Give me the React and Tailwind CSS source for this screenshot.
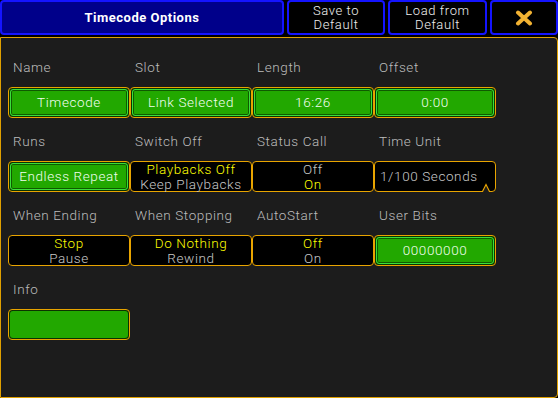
import React from "react";

const font = { fontFamily: "Roboto, 'Liberation Sans', sans-serif" };

function GreenButton({ children }) {
  return (
    <div className="h-[31px] rounded-[4px] border border-[#e8a400] bg-[#0b3300] p-px">
      <div className="flex h-full items-center justify-center rounded-[3px] border border-[#39e039] bg-[#22a800] text-[13.5px] font-light tracking-[0.6px] text-[#f2fff0] shadow-[inset_0_0_0_1px_#0f5a00]">
        {children}
      </div>
    </div>
  );
}

function DarkButton({ top, bottom, active }) {
  return (
    <div className="flex h-[31px] flex-col items-center justify-center rounded-[4px] border border-[#e8a400] bg-black text-[13.5px] leading-[15px] font-light tracking-[0.6px]">
      <span className={active === 0 ? "text-[#ffff00]" : "text-[#c8c8c8]"}>{top}</span>
      <span className={active === 1 ? "text-[#ffff00]" : "text-[#c8c8c8]"}>{bottom}</span>
    </div>
  );
}

function SelectButton({ children }) {
  return (
    <div className="relative flex h-[31px] items-center rounded-[4px] border border-[#e8a400] bg-black pl-[5px] text-[13.5px] font-light tracking-[0.6px] text-[#c8c8c8]">
      {children}
      <svg className="absolute right-[3px] bottom-[-1px]" width="12" height="9" viewBox="0 0 12 9">
        <path d="M2.5 9 L6 1.5 L9.5 9 Z" fill="#1c1c1c" />
        <path d="M0 8.5 H2.5 L6 1.5 L9.5 8.5 H12" fill="none" stroke="#e8a400" strokeWidth="1.2" />
      </svg>
    </div>
  );
}

function Cell({ label, children }) {
  return (
    <div className="w-[122px]">
      <div className="flex h-[20px] items-center pl-[5px] text-[13.5px] font-light tracking-[0.6px] text-[#bcbcbc]">{label}</div>
      <div className="mt-[10px]">{children}</div>
    </div>
  );
}

export default function App() {
  return (
    <div style={font} className="h-[398px] w-[558px] overflow-hidden bg-black">
      {/* Header */}
      <div className="flex h-[35px] gap-[3px]">
        <div className="flex w-[284px] items-center justify-center rounded-[4px] border-2 border-[#1414ff] bg-[#00008a] text-[13px] font-bold tracking-[0.5px] text-white">
          Timecode Options
        </div>
        <div className="flex w-[98px] flex-col items-center justify-center rounded-[4px] border-2 border-[#1414ff] bg-black text-[13px] leading-[14px] font-light tracking-[0.6px] text-[#f0f0f0]">
          <span>Save to</span>
          <span>Default</span>
        </div>
        <div className="flex w-[99px] flex-col items-center justify-center rounded-[4px] border-2 border-[#1414ff] bg-black text-[13px] leading-[14px] font-light tracking-[0.6px] text-[#f0f0f0]">
          <span>Load from</span>
          <span>Default</span>
        </div>
        <div className="flex flex-1 items-center justify-center rounded-[4px] border-2 border-[#1414ff] bg-black">
          <svg width="18" height="16" viewBox="0 0 18 16">
            <path d="M3 2.5 L15 13.5 M15 2.5 L3 13.5" stroke="#f2b232" strokeWidth="4" strokeLinecap="round" />
          </svg>
        </div>
      </div>

      {/* Panel */}
      <div className="mt-[2px] h-[361px] rounded-r-[4px] border border-[#e0a000] bg-[#1c1c1c] pt-[19px] pl-[7px]">
        <div className="flex">
          <Cell label="Name"><GreenButton>Timecode</GreenButton></Cell>
          <Cell label="Slot"><GreenButton>Link Selected</GreenButton></Cell>
          <Cell label="Length"><GreenButton>16:26</GreenButton></Cell>
          <Cell label="Offset"><GreenButton>0:00</GreenButton></Cell>
        </div>
        <div className="mt-[13px] flex">
          <Cell label="Runs"><GreenButton>Endless Repeat</GreenButton></Cell>
          <Cell label="Switch Off"><DarkButton top="Playbacks Off" bottom="Keep Playbacks" active={0} /></Cell>
          <Cell label="Status Call"><DarkButton top="Off" bottom="On" active={1} /></Cell>
          <Cell label="Time Unit"><SelectButton>1/100 Seconds</SelectButton></Cell>
        </div>
        <div className="mt-[13px] flex">
          <Cell label="When Ending"><DarkButton top="Stop" bottom="Pause" active={0} /></Cell>
          <Cell label="When Stopping"><DarkButton top="Do Nothing" bottom="Rewind" active={0} /></Cell>
          <Cell label="AutoStart"><DarkButton top="Off" bottom="On" active={0} /></Cell>
          <Cell label="User Bits"><GreenButton>00000000</GreenButton></Cell>
        </div>
        <div className="mt-[13px] flex">
          <Cell label="Info">
            <div className="h-[31px] rounded-[4px] border border-[#e8a400] bg-[#0b3300] p-px">
              <div className="h-full rounded-[3px] bg-[#22a800]" />
            </div>
          </Cell>
        </div>
      </div>
    </div>
  );
}
